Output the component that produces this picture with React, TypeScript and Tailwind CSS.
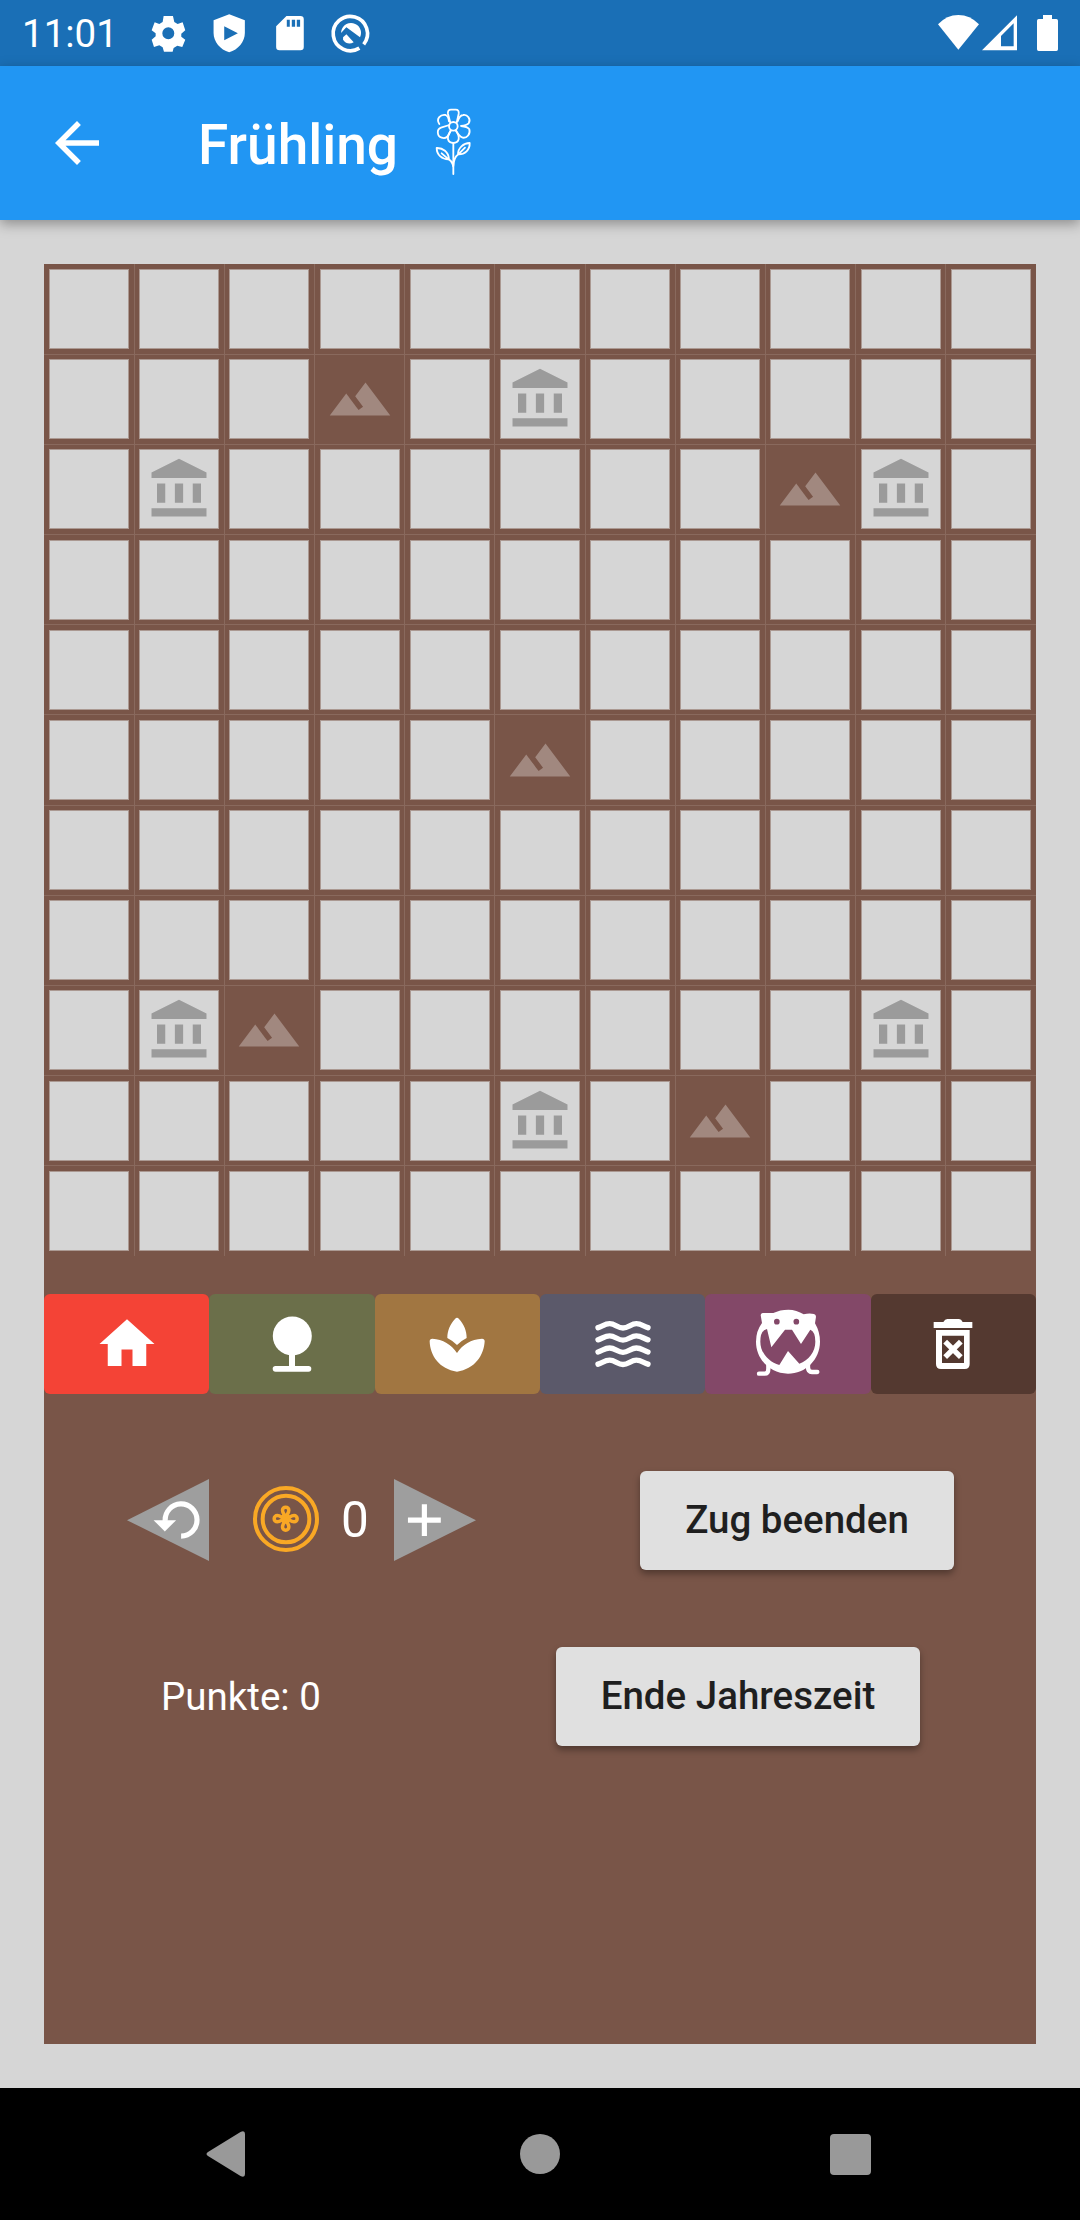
import type { ReactNode } from "react";

const SIZE = 11;
const PITCH = 992 / 11;
const starts = Array.from({ length: SIZE + 1 }, (_, i) => Math.floor(PITCH * i + 0.001));
const tracks = Array.from({ length: SIZE }, (_, i) => `${starts[i + 1] - starts[i]}px`).join(" ");
const inset = (i: number) => Math.floor(PITCH * i + 5.5) - starts[i];

const MOUNTAINS = ["1-3", "2-8", "5-5", "8-2", "9-7"];
const RUINS = ["1-5", "2-1", "2-9", "8-1", "8-9", "9-5"];

function Mountain() {
  return (
    <svg viewBox="0 0 24 24" className="size-[66px] shrink-0 fill-[#a1887f]">
      <path d="M14 6l-3.75 5 2.85 3.8-1.6 1.2C9.81 13.75 7 10 7 10l-6 8h22L14 6z" />
    </svg>
  );
}

function Ruin() {
  return (
    <svg viewBox="0 0 24 24" className="size-[66px] shrink-0 fill-[#9b9b9b]">
      <path d="M12 1L2 6v2h20V6zM4 10h3v7H4zM10.5 10h3v7h-3zM17 10h3v7h-3zM2 19h20v3H2z" />
    </svg>
  );
}

function Cell({ row, col }: { row: number; col: number }) {
  const key = `${row}-${col}`;
  const mountain = MOUNTAINS.includes(key);
  return (
    <div
      className={`relative ${row > 0 ? "border-t" : ""} ${col > 0 ? "border-l" : ""} border-[#89695d]`}
      style={{
        paddingLeft: inset(col) - (col > 0 ? 1 : 0),
        paddingTop: inset(row) - (row > 0 ? 1 : 0),
      }}
    >
      <div
        className={`flex size-20 items-center justify-center ${
          mountain ? "" : "border border-[#ab9992] bg-[#d6d6d6]"
        }`}
      >
        {mountain && <Mountain />}
        {RUINS.includes(key) && <Ruin />}
      </div>
    </div>
  );
}

function Board() {
  return (
    <div className="grid" style={{ gridTemplateColumns: tracks, gridTemplateRows: tracks }}>
      {Array.from({ length: SIZE * SIZE }, (_, i) => (
        <Cell key={i} row={Math.floor(i / SIZE)} col={i % SIZE} />
      ))}
    </div>
  );
}

function StatusBar() {
  return (
    <header className="flex h-[66px] items-center bg-[#1a6fb6] text-white">
      <span className="ml-[22px] w-[123px] pt-[2px] text-[38.500px] leading-[66px]">11:01</span>
      <svg viewBox="435 0 700 198" className="h-[66px] w-[233px] fill-white">
        <path
          fillRule="evenodd"
          d="M491 48h28l4 18 10 6 15-5 8 24-12 10v9l12 9-9 22-15-4-11 7-3 11h-26l-4-13-10-6-16 5-7-22 12-10v-9l-12-9 9-24 14 5 10-6zM505 82a18 18 0 1 0 0 36 18 18 0 1 0 0-36z"
        />
        <path fillRule="evenodd" d="M688 43l47 18v38c0 26-20 50-47 58-27-8-47-32-47-58V61zM673 79v42l41-21z" />
        <path
          fillRule="evenodd"
          d="M860 48h42q10 0 10 10v83q0 10-10 10h-63q-10 0-10-10V79zM861 59v21h9V59zM876 59v21h10V59zM891 59v21h10V59z"
        />
        <path d="M1092 133A51.500 51.500 0 1 0 1079 144.500" fill="none" stroke="white" strokeWidth="11" />
        <path d="M1024 100A30 30 0 1 1 1081 112L1040 82z" />
        <path d="M1026 104L1040 90L1062 113L1076 126" fill="none" stroke="#1a6fb6" strokeWidth="9" />
        <path d="M1030 112L1040 103L1062 127Q1043 137 1030 119z" />
      </svg>
      <svg viewBox="105 0 375 198" className="mr-[20px] ml-auto h-[66px] w-[125px] fill-white">
        <path d="M114 73Q140 45 175 45T237 73L175 149z" />
        <path fillRule="evenodd" d="M351 46V151H246zM341 70L303 108V139H341z" />
        <path d="M429 45h27v12h13q5 0 5 5v86q0 5-5 5h-53q-5 0-5-5V62q0-5 5-5h13z" />
      </svg>
    </header>
  );
}

function Blossom() {
  return (
    <svg
      viewBox="160 135 126 216"
      className="mb-[4px] ml-[35px] h-[72px] w-[42px] fill-none stroke-white"
      strokeWidth="5.500"
      strokeLinecap="round"
      strokeLinejoin="round"
    >
      <circle cx="221" cy="199" r="13" />
      <path d="M212 188L205 162Q203 149 214 149H228Q239 149 237 162L231 188" />
      <path d="M179 192C168 176 183 162 198 165Q206 168 208 184" />
      <path d="M234 184Q240 166 250 165C263 162 275 178 267 190Q261 196 244 198Q264 200 269 208C273 222 262 235 249 233Q238 229 229 211" />
      <path d="M209 195L184 203C170 208 172 229 186 233C200 238 207 228 213 211" />
      <path d="M213 213Q203 226 205 238Q208 249 221 249T237 238Q239 226 229 213" />
      <path d="M221 250V342M171 264C189 263 207 276 208 298C188 299 171 285 171 264zM186 280L208 299Q219 305 221 322" />
      <path d="M270 249C251 249 235 264 235 283C256 284 271 269 270 249zM256 263L236 283Q222 293 221 318" />
    </svg>
  );
}

function AppBar() {
  return (
    <div className="relative flex h-[154px] items-center bg-[#2196f3] text-white shadow-[0_4px_12px_rgba(0,0,0,0.34)]">
      <svg viewBox="4 4 16 16" className="ml-[55px] size-[44px] fill-white">
        <path d="M20 11H7.830l5.590-5.590L12 4l-8 8 8 8 1.410-1.410L7.830 13H20z" />
      </svg>
      <h1 className="ml-[99px] pt-[4px] text-[55px] leading-none font-medium">Frühling</h1>
      <Blossom />
    </div>
  );
}

const HomeIcon = (
  <svg viewBox="0 0 24 24" className="size-[66px] fill-white">
    <path d="M10 20v-6h4v6h5v-8h3L12 3 2 12h3v8z" />
  </svg>
);

const TreeIcon = (
  <svg viewBox="0 0 66 66" className="size-[66px] fill-white">
    <circle cx="33.300" cy="25" r="19.500" />
    <path d="M30 42h6v14h-6z" />
    <rect x="13.700" y="55" width="38.600" height="5.700" rx="2.850" />
  </svg>
);

const SproutIcon = (
  <svg viewBox="283 93 198 198" className="size-[66px] fill-white">
    <path d="M376 117Q382 110 388 117C403 133 411 152 411 174Q395 182 382 195Q369 182 353 174C353 152 361 133 376 117z" />
    <path d="M308 176C340 178 365 193 382 219C399 193 424 178 457 176Q465 176 465 184C463 226 435 268 382 275C329 268 301 226 300 184Q300 176 308 176z" />
  </svg>
);

const WaterIcon = (
  <svg viewBox="779 93 198 198" className="size-[66px] fill-none stroke-white" strokeWidth="16" strokeLinecap="round">
    {[0, 36.5, 73, 109.5].map((dy) => (
      <path
        key={dy}
        transform={`translate(0 ${dy})`}
        d="M803 143C816 139 824 131 838 131C854 131 862 144 878 144C894 144 902 131 918 131C932 131 940 139 953 143"
      />
    ))}
  </svg>
);

const MonsterIcon = (
  <svg viewBox="189 87 210 210" className="size-[70px] fill-white">
    <path
      fillRule="evenodd"
      d="M250 99Q270 89 295 89T341 103Q358 98 372 102Q378 104 378 110L375 130Q390 156 390 185C390 238 347 281 294 281S198 238 198 185Q198 153 216 129L212 105Q212 100 218 99zM231 147Q211 151 211 185C211 218 236 246 268 255L294 213L328 251C356 241 376 215 376 185Q376 155 361 149L333 192L306 149H285L244 202z"
    />
    <path
      d="M235 250V267Q235 281 224 281H207M354 250V262Q354 276 366 276H382"
      fill="none"
      stroke="white"
      strokeWidth="13"
      strokeLinecap="round"
    />
    <circle cx="260.500" cy="125" r="8.500" fill="#834868" />
    <circle cx="319" cy="125" r="8.500" fill="#834868" />
  </svg>
);

const TrashIcon = (
  <svg viewBox="691 93 198 198" className="size-[66px] fill-white">
    <path d="M732 126H761Q766 117 773 117H808Q815 117 819 126H848V144H732z" />
    <path fillRule="evenodd" d="M739 150H840V252Q840 267 825 267H754Q739 267 739 252zM757 167V249H823V167z" />
    <path d="M766.500 185L813.500 231.500M813.500 185L766.500 231.500" stroke="white" strokeWidth="16" />
  </svg>
);

function Tile({ className, children }: { className: string; children: ReactNode }) {
  return (
    <button className={`flex h-[99.500px] flex-1 items-center justify-center rounded-[6px] ${className}`}>
      {children}
    </button>
  );
}

function Toolbar() {
  return (
    <div className="mt-[38px] flex">
      <Tile className="bg-[#f44336]">{HomeIcon}</Tile>
      <Tile className="bg-[#6b6f4a]">{TreeIcon}</Tile>
      <Tile className="bg-[#a17641]">{SproutIcon}</Tile>
      <Tile className="bg-[#5b596a]">{WaterIcon}</Tile>
      <Tile className="bg-[#834868]">{MonsterIcon}</Tile>
      <Tile className="bg-[#543930]">{TrashIcon}</Tile>
    </div>
  );
}

function Coin() {
  return (
    <svg viewBox="456 105 204 204" className="mb-[2px] ml-[43px] size-[68px] fill-none stroke-[#f9a825]" strokeWidth="12">
      <circle cx="558" cy="207" r="93" />
      <circle cx="558" cy="207" r="70" />
      {[0, 90, 180, 270].map((a) => (
        <path
          key={a}
          transform={`rotate(${a} 557 206)`}
          strokeWidth="10.500"
          strokeLinejoin="round"
          d="M557 204C556 196 547.500 191 547.500 181A9.500 9.500 0 0 1 566.500 181C566.500 191 558 196 557 204z"
        />
      ))}
      <path d="M546 195L568 217M568 195L546 217" strokeWidth="6" />
    </svg>
  );
}

function CoinRow() {
  return (
    <div className="mt-[76.500px] flex h-[100px] items-center">
      <svg viewBox="80 86 247 247" className="ml-[83px] size-[82px] fill-white">
        <path d="M80 210L327 86V333z" fill="#9e9e9e" />
        <path d="M195 212A48 48.500 0 1 1 243 258" fill="none" stroke="white" strokeWidth="15.500" />
        <path d="M160 210H228L194 244z" />
      </svg>
      <Coin />
      <span className="ml-[21px] w-[29px] pt-[2px] text-[49.500px] leading-none text-white">0</span>
      <svg viewBox="879 86 247 247" className="ml-[24px] size-[82px]">
        <path d="M1126 210L879 86V333z" fill="#9e9e9e" />
        <path d="M921 210H1020M970.500 162V258" fill="none" stroke="white" strokeWidth="15.500" />
      </svg>
      <ActionButton className="mr-[82px] ml-auto w-[314px]">Zug beenden</ActionButton>
    </div>
  );
}

function ActionButton({ className, children }: { className: string; children: ReactNode }) {
  return (
    <button
      className={`h-[99px] rounded-[6px] bg-[#e0e0e0] text-[38.500px] font-medium whitespace-nowrap text-[#1f1f1f] shadow-[0_4px_7px_rgba(0,0,0,0.34)] ${className}`}
    >
      {children}
    </button>
  );
}

function NavigationBar() {
  return (
    <nav className="flex h-[132px] items-center bg-black">
      <svg viewBox="0 0 39 46" className="ml-[206px] h-[46px] w-[39px] fill-[#999]">
        <path d="M34.500 1Q39 -1 39 3V43Q39 47 34.500 45L2 25Q-1 23 2 21z" />
      </svg>
      <div className="ml-[275px] size-[40px] rounded-full bg-[#999]" />
      <div className="ml-[270px] size-[41px] rounded-[4px] bg-[#999]" />
    </nav>
  );
}

export default function App() {
  return (
    <div className="flex h-[2220px] w-[1080px] flex-col overflow-hidden bg-[#d6d6d6] font-['Roboto',sans-serif]">
      <StatusBar />
      <AppBar />
      <main className="mx-[44px] my-[44px] flex-1 bg-[#795548]">
        <Board />
        <Toolbar />
        <CoinRow />
        <div className="mt-[76px] flex h-[100px] items-center">
          <span className="ml-[117px] pt-[3px] text-[38.500px] leading-none text-white">Punkte: 0</span>
          <ActionButton className="mr-[116px] ml-auto w-[364px]">Ende Jahreszeit</ActionButton>
        </div>
      </main>
      <NavigationBar />
    </div>
  );
}
